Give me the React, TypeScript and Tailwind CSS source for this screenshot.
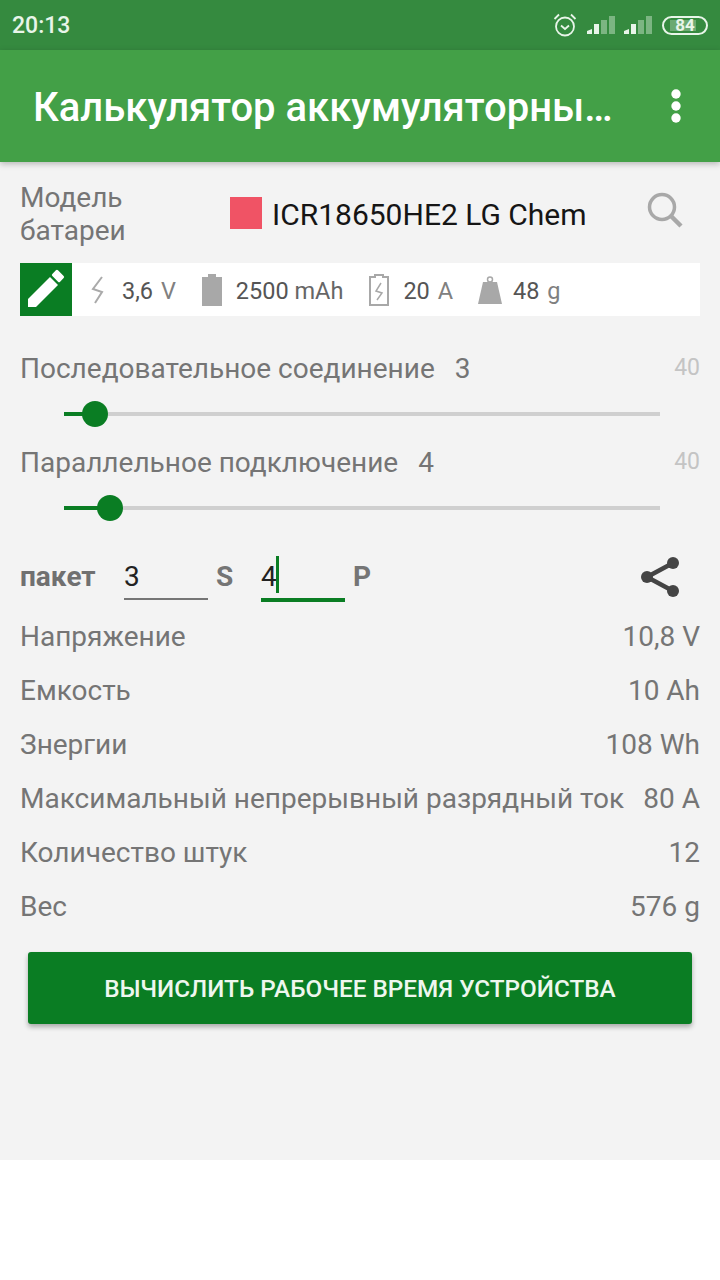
const specs = [
  ["Напряжение", "10,8 V"],
  ["Емкость", "10 Ah"],
  ["Знергии", "108 Wh"],
  ["Максимальный непрерывный разрядный ток", "80 A"],
  ["Количество штук", "12"],
  ["Вес", "576 g"],
];

function Signal() {
  return (
    <svg width="28" height="18" viewBox="0 0 28 18">
      <path d="M0 18v-3l5-2v5z" fill="#e8f5e9" />
      <rect x="7" y="8" width="5" height="10" fill="#e8f5e9" />
      <rect x="14" y="4" width="6" height="14" fill="#e8f5e9" fillOpacity="0.4" />
      <rect x="22" y="0" width="6" height="18" fill="#e8f5e9" fillOpacity="0.4" />
    </svg>
  );
}

function Alarm() {
  return (
    <svg width="24" height="24" viewBox="0 0 24 24" fill="none" stroke="#e8f5e9" strokeWidth="1.8">
      <circle cx="12" cy="13.5" r="9" />
      <path d="M8 12.5l4 3.5 4-3.5" />
      <path d="M1.5 6L6 1.5M22.5 6L18 1.5" />
    </svg>
  );
}

function Slider({ label, value, fill }: { label: string; value: string; fill: string }) {
  return (
    <div className="h-[94px]">
      <div className="flex justify-between">
        <p className="text-[28px] leading-[40px] text-[#757575]">
          {label}
          <span className="ml-[20px]">{value}</span>
        </p>
        <span className="text-[23px] leading-[38px] text-[#c4c4c4]">40</span>
      </div>
      <div className="relative mt-[23px] ml-[44px] h-[4px] w-[596px] bg-[#cfcfcf]">
        <div className={`h-full bg-[#0a7d23] ${fill}`} />
        <div className={`absolute top-[-11px] h-[26px] w-[26px] -translate-x-1/2 rounded-full bg-[#0a7d23] ${fill === "w-[31px]" ? "left-[31px]" : "left-[46px]"}`} />
      </div>
    </div>
  );
}

export default function App() {
  return (
    <div className="w-[720px] h-[1280px] bg-white font-['Roboto',sans-serif]">
      <div className="h-[1160px] bg-[#f3f3f3]">
        <div className="flex h-[50px] items-center justify-between bg-[#358a3f] pl-[12px] pr-[12px] text-[#e8f5e9]">
          <span className="pt-[3px] text-[23px] font-medium">20:13</span>
          <div className="flex items-center">
            <Alarm />
            <div className="ml-[10px] flex gap-[9px]">
              <Signal />
              <Signal />
            </div>
            <div className="relative ml-[10px] flex h-[19px] w-[46px] items-center justify-center rounded-full border-2 border-[#e8f5e9] text-[17px] font-bold leading-none">
              <div className="absolute inset-y-[2px] left-[6px] w-[26px] bg-[#e8f5e9]/30" />
              <span className="relative">84</span>
            </div>
          </div>
        </div>

        <header className="flex h-[112px] items-center justify-between bg-[#43a047] pl-[33px] pr-[38px] shadow-[0_2px_6px_rgba(0,0,0,0.25)]">
          <h1 className="pt-[4px] text-[40px] font-medium text-white">Калькулятор аккумуляторны…</h1>
          <svg width="12" height="36" viewBox="0 0 12 36" fill="white">
            <circle cx="6" cy="6" r="4.7" />
            <circle cx="6" cy="18" r="4.7" />
            <circle cx="6" cy="30" r="4.7" />
          </svg>
        </header>

        <main className="px-[20px]">
          <div className="flex h-[101px] items-center">
            <p className="w-[210px] pt-[3px] text-[28px] leading-[33px] text-[#757575]">
              Модель
              <br />
              батареи
            </p>
            <div className="h-[32px] w-[32px] bg-[#f05365]" />
            <span className="ml-[10px] pt-[3px] text-[30px] text-[#151515]">ICR18650HE2 LG Chem</span>
            <svg width="36" height="36" viewBox="0 0 36 36" fill="none" stroke="#a8a8a8" className="ml-auto mr-[17px] mt-[-5px]">
              <circle cx="15" cy="15" r="12.5" strokeWidth="3.5" />
              <path d="M24 24l10 10" strokeWidth="4.5" />
            </svg>
          </div>

          <div className="flex h-[53px] items-center bg-white text-[23.5px] text-[#555555]">
            <div className="h-full w-[52px] bg-[#0a7d23]">
              <svg width="52" height="53" viewBox="0 0 52 53" fill="white">
                <path d="M8 36L30 14l8 8-22 22H8z" />
                <rect x="32.5" y="9" width="11" height="8" rx="1.5" transform="rotate(45 38 13)" />
              </svg>
            </div>
            <svg width="14" height="28" viewBox="0 0 14 28" fill="none" stroke="#aaaaaa" strokeWidth="2" className="ml-[19px]">
              <path d="M11 1L2 13l9 3-7 11" />
            </svg>
            <span className="ml-[17px] pt-[4px]">3,6 <span className="ml-[2px] text-[#808080]">V</span></span>
            <svg width="20" height="32" viewBox="0 0 20 32" className="ml-[26px]">
              <path d="M6 0h8v3h6v29H0V3h6z" fill="#a8a8a8" />
            </svg>
            <span className="ml-[14px] pt-[4px]">2500 <span className="text-[#666666]">mAh</span></span>
            <svg width="20" height="32" viewBox="0 0 20 32" fill="none" stroke="#a8a8a8" strokeWidth="2" className="ml-[26px]">
              <path d="M6 3V1h8v2h5v28H1V3z" />
              <path d="M12 9l-5 8 6 2-5 7" strokeWidth="1.5" />
            </svg>
            <span className="ml-[14px] pt-[4px]">20 <span className="ml-[2px] text-[#808080]">A</span></span>
            <svg width="24" height="28" viewBox="0 0 24 28" className="ml-[25px]">
              <circle cx="12" cy="3.5" r="2.5" fill="none" stroke="#a8a8a8" strokeWidth="1.5" />
              <path d="M5 6h14l5 22H0z" fill="#a8a8a8" />
            </svg>
            <span className="ml-[11px] pt-[4px]">48 <span className="ml-[2px] text-[#808080]">g</span></span>
          </div>

          <div className="mt-[33px]">
            <Slider label="Последовательное соединение" value="3" fill="w-[31px]" />
            <Slider label="Параллельное подключение" value="4" fill="w-[46px]" />
          </div>

          <div className="mt-[7px] flex h-[66px] items-center text-[28px]">
            <span className="w-[104px] font-bold text-[#707070]">пакет</span>
            <div className="h-[46px] w-[84px] border-b-2 border-[#757575] leading-[46px] text-[#222222]">3</div>
            <span className="ml-[8px] w-[45px] font-bold text-[#757575]">S</span>
            <div className="relative mt-[2px] h-[48px] w-[84px] border-b-[4px] border-[#0a7d23] leading-[46px] text-[#222222]">
              4
              <div className="absolute left-[15px] top-[2px] h-[37px] w-[3px] bg-[#0a7d23]" />
            </div>
            <span className="ml-[8px] font-bold text-[#757575]">P</span>
            <svg width="40" height="42" viewBox="0 0 40 42" fill="#444444" className="ml-auto mr-[20px]">
              <circle cx="33" cy="7" r="6" />
              <circle cx="33" cy="35" r="6" />
              <circle cx="7" cy="21" r="6" />
              <path d="M7 21L33 7M7 21l26 14" stroke="#444444" strokeWidth="4.5" />
            </svg>
          </div>

          <div>
            {specs.map(([name, val]) => (
              <div key={name} className="flex h-[54px] items-center justify-between text-[28px] text-[#757575]">
                <span>{name}</span>
                <span>{val}</span>
              </div>
            ))}
          </div>

          <button className="mx-[8px] mt-[18px] h-[72px] w-[664px] rounded-[3px] bg-[#0a7d23] pt-[2px] text-[24.3px] font-medium text-[#eef7ee] shadow-[0_3px_5px_rgba(0,0,0,0.3)]">
            ВЫЧИСЛИТЬ РАБОЧЕЕ ВРЕМЯ УСТРОЙСТВА
          </button>
        </main>
      </div>
    </div>
  );
}
